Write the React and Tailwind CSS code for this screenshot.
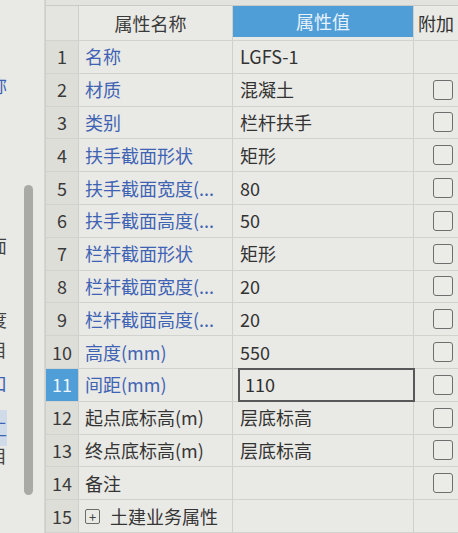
const rows = [
  { n: 1, name: "名称", value: "LGFS-1", blue: true, check: false },
  { n: 2, name: "材质", value: "混凝土", blue: true, check: true },
  { n: 3, name: "类别", value: "栏杆扶手", blue: true, check: true },
  { n: 4, name: "扶手截面形状", value: "矩形", blue: true, check: true },
  { n: 5, name: "扶手截面宽度(...", value: "80", blue: true, check: true },
  { n: 6, name: "扶手截面高度(...", value: "50", blue: true, check: true },
  { n: 7, name: "栏杆截面形状", value: "矩形", blue: true, check: true },
  { n: 8, name: "栏杆截面宽度(...", value: "20", blue: true, check: true },
  { n: 9, name: "栏杆截面高度(...", value: "20", blue: true, check: true },
  { n: 10, name: "高度(mm)", value: "550", blue: true, check: true },
  { n: 11, name: "间距(mm)", value: "110", blue: true, check: true, active: true },
  { n: 12, name: "起点底标高(m)", value: "层底标高", blue: false, check: true },
  { n: 13, name: "终点底标高(m)", value: "层底标高", blue: false, check: true },
  { n: 14, name: "备注", value: "", blue: false, check: true },
  { n: 15, name: "土建业务属性", value: "", blue: false, check: false, group: true },
];

const Row = ({ row }) => (
  <div className="flex h-[32.8px] border-b border-[#d2d2ce]">
    <div
      className={`w-[33px] shrink-0 flex items-center justify-center border-r border-[#cfcfcb] ${
        row.active ? "bg-[#4f9ed8] text-[#eef6fc]" : "bg-[#deded9] text-[#3a3a3a]"
      }`}
    >
      {row.n}
    </div>
    <div
      className={`w-[154px] shrink-0 flex items-center pl-[6px] gap-[10px] whitespace-nowrap overflow-hidden border-r border-[#cfcfcb] ${
        row.blue ? "text-[#3f63b4]" : "text-[#353535]"
      }`}
    >
      {row.group && (
        <span className="w-[15px] h-[15px] border border-[#6a6a6a] rounded-[2px] flex items-center justify-center text-[13px] leading-none text-[#444]">
          +
        </span>
      )}
      {row.name}
    </div>
    <div className="w-[181px] shrink-0 flex items-stretch border-r border-[#cfcfcb] pl-[5px]">
      {row.active ? (
        <div className="flex-1 flex items-center pl-[5px] border-2 border-[#585858] -my-[1px] -mr-[2px] text-[#2f2f2f]">
          {row.value}
        </div>
      ) : (
        <div className="flex-1 flex items-center pl-[2px] text-[#333]">{row.value}</div>
      )}
    </div>
    <div className="flex-1 flex items-center pl-[19px]">
      {row.check && (
        <div className="w-[20px] h-[20px] border-[1.5px] border-[#6e6e6e] rounded-[3px] bg-[#ebebe7]" />
      )}
    </div>
  </div>
);

export default function App() {
  return (
    <div
      className="w-[458px] h-[533px] overflow-hidden flex bg-[#e9e9e5] text-[18px]"
      style={{ fontFamily: '"Noto Sans CJK SC", "Noto Sans", sans-serif' }}
    >
      {/* left side panel with scrollbar */}
      <div className="w-[46px] shrink-0 flex border-r border-[#cdcdc9]">
        <div className="w-[7px] shrink-0 flex flex-col overflow-hidden text-[#3f63b4] text-[18px] leading-none">
          <div className="h-[76px]" />
          <div className="h-[20px] flex justify-end whitespace-nowrap">称</div>
          <div className="h-[140px]" />
          <div className="h-[30px] flex justify-end whitespace-nowrap text-[#444]">面</div>
          <div className="h-[44px]" />
          <div className="h-[30px] flex justify-end whitespace-nowrap text-[#444]">度</div>
          <div className="h-[34px] flex justify-end whitespace-nowrap text-[#444]">目</div>
          <div className="h-[36px] flex justify-end whitespace-nowrap">口</div>
          <div className="h-[36px] bg-[#cfdbe9] flex items-center justify-end whitespace-nowrap">工</div>
          <div className="h-[34px] flex justify-end whitespace-nowrap text-[#444]">目</div>
        </div>
        <div className="flex-1 flex justify-center pt-[185px] pl-[6px] border-r border-[#d6d6d2]">
          <div className="w-[9px] h-[310px] rounded-full bg-[#a9a9a6]" />
        </div>
      </div>

      {/* property grid */}
      <div className="flex-1 flex flex-col">
        <div className="h-[6px] border-b border-[#c9c9c5] bg-[#e2e2de]" />
        <div className="flex h-[35px] border-b border-[#d2d2ce]">
          <div className="w-[33px] shrink-0 border-r border-[#cfcfcb] bg-[#e4e4e0]" />
          <div className="w-[154px] shrink-0 flex items-center justify-center pr-[10px] text-[#3a3a3a] border-r border-[#cfcfcb]">
            属性名称
          </div>
          <div className="w-[181px] shrink-0 flex pb-[3px] border-r border-[#cfcfcb]">
            <div className="flex-1 bg-[#4f9ed8] text-[#e8f2fa] flex items-center justify-center">属性值</div>
          </div>
          <div className="flex-1 flex items-center pl-[4px] whitespace-nowrap overflow-hidden text-[#333]">附加</div>
        </div>
        {rows.map((r) => (
          <Row key={r.n} row={r} />
        ))}
      </div>
    </div>
  );
}
